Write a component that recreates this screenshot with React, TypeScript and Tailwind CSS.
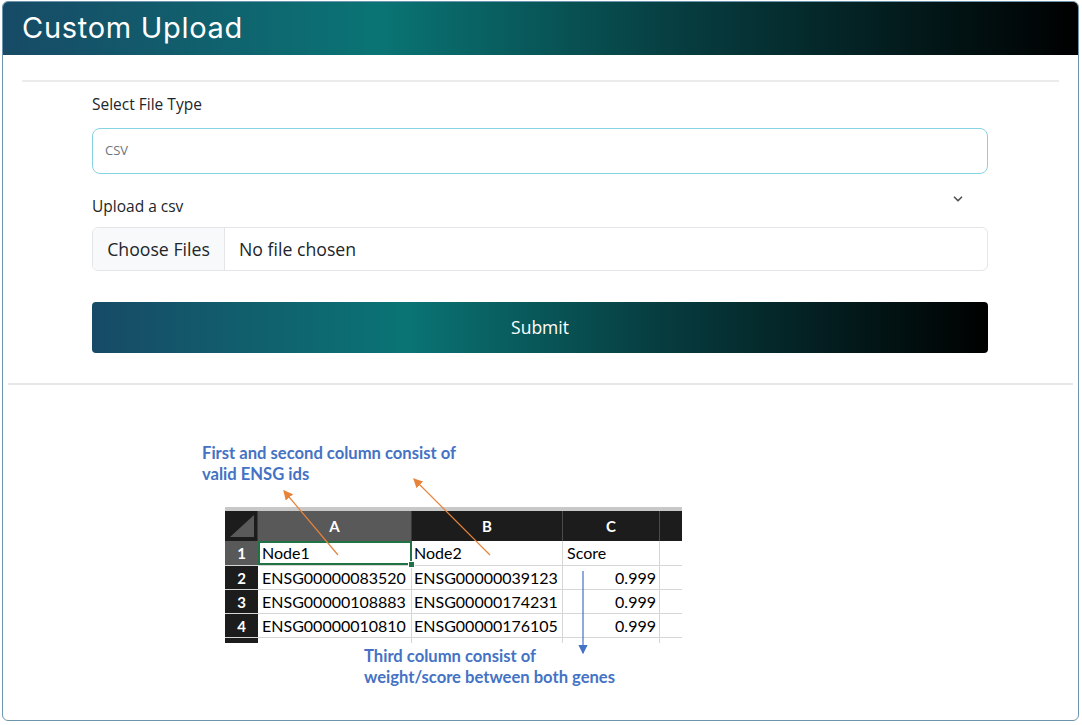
import { ChevronDown } from 'lucide-react';

const rows = [
    { n: '2', a: 'ENSG00000083520', b: 'ENSG00000039123', c: '0.999' },
    { n: '3', a: 'ENSG00000108883', b: 'ENSG00000174231', c: '0.999' },
    { n: '4', a: 'ENSG00000010810', b: 'ENSG00000176105', c: '0.999' },
];

const grad = 'bg-[linear-gradient(90deg,#174a66_0%,#0a7474_35%,#073f42_62%,#000_100%)]';

function Sheet() {
    return (
        <div className="w-[457px] font-['Lato',sans-serif] font-normal text-[16px] leading-[20px] text-black">
            <div className="h-[4px] bg-[#c8c8c8]" />
            {/* column headers */}
            <div className="flex h-[30px] bg-[#1c1c1c] text-white font-bold text-[15px]">
                <div className="w-[33px] relative border-r border-[#3a3a3a]">
                    <svg className="absolute left-[5px] bottom-[4px]" width="24" height="22" viewBox="0 0 24 22">
                        <polygon points="24,0 24,22 0,22" fill="#5a5a5a" />
                    </svg>
                </div>
                <div className="w-[154px] bg-[#595959] flex items-center justify-center border-r border-[#3a3a3a]">A</div>
                <div className="w-[151px] flex items-center justify-center border-r border-[#4a4a4a]">B</div>
                <div className="w-[97px] flex items-center justify-center border-r border-[#4a4a4a]">C</div>
                <div className="flex-1" />
            </div>
            {/* row 1 */}
            <div className="flex h-[25px] border-b border-[#d6d6d6]">
                <div className="w-[33px] bg-[#595959] text-white font-bold text-[15px] flex items-center justify-center">1</div>
                <div className="w-[154px] relative border-2 border-[#217346] flex items-center pl-[2px]">
                    Node1
                    <div className="absolute right-[-5px] bottom-[-5px] w-[7px] h-[7px] bg-[#217346] border border-white" />
                </div>
                <div className="w-[151px] flex items-center pl-[2px] border-r border-[#d6d6d6]">Node2</div>
                <div className="w-[97px] flex items-center pl-[4px] border-r border-[#d6d6d6]">Score</div>
                <div className="flex-1" />
            </div>
            {rows.map((r) => (
                <div key={r.n} className="flex h-[24px] border-b border-[#d6d6d6]">
                    <div className="w-[33px] bg-[#1c1c1c] text-white font-bold text-[15px] flex items-center justify-center">{r.n}</div>
                    <div className="w-[154px] flex items-center pl-[4px] border-r border-[#d6d6d6]">{r.a}</div>
                    <div className="w-[151px] flex items-center pl-[2px] border-r border-[#d6d6d6]">{r.b}</div>
                    <div className="w-[97px] flex items-center justify-end pr-[3px] border-r border-[#d6d6d6]">{r.c}</div>
                    <div className="flex-1" />
                </div>
            ))}
            <div className="flex h-[5px]">
                <div className="w-[33px] bg-[#1c1c1c]" />
                <div className="w-[154px] border-r border-[#d6d6d6]" />
                <div className="w-[151px] border-r border-[#d6d6d6]" />
                <div className="w-[97px] border-r border-[#d6d6d6]" />
            </div>
        </div>
    );
}

export default function App() {
    return (
        <div className="w-[1082px] h-[725px] bg-white pl-[2px] pt-[1px] font-['Open_Sans',sans-serif] text-[#212529]">
            <div className="w-[1077px] h-[720px] border border-[#6d95ad] rounded-[6px] overflow-hidden flex flex-col">
                {/* Header */}
                <div className={`h-[53px] shrink-0 flex items-center px-[19px] pb-[2px] ${grad}`}>
                    <h1 className="font-['Inter',sans-serif] text-[29px] text-white tracking-[0.7px]">Custom Upload</h1>
                </div>

                {/* Form */}
                <div className="px-[19px] pt-[25px]">
                    <div className="h-[2px] bg-[#ebebeb]" />
                </div>
                <div className="ml-[89px] w-[896px] mt-[10px]">
                    <label className="block text-[15.5px] leading-[24px]">Select File Type</label>
                    <div className="mt-[12px] h-[46px] border border-[#86d3e3] rounded-[8px] flex items-center px-[12px] text-[13px] text-[#6c757d]">
                        CSV
                    </div>
                    <div className="mt-[20px] flex items-center justify-between h-[24px]">
                        <label className="text-[15.5px] leading-[24px]">Upload a csv</label>
                        <ChevronDown className="w-[14px] h-[14px] text-[#555] mr-[23px] -mt-[14px]" strokeWidth={3} />
                    </div>
                    <div className="mt-[9px] h-[44px] border border-[#e3e5e8] rounded-[6px] flex overflow-hidden text-[17.7px]">
                        <div className="w-[132px] bg-[#f8f9fa] border-r border-[#e3e5e8] flex items-center justify-center">Choose Files</div>
                        <div className="flex items-center pl-[14px]">No file chosen</div>
                    </div>
                    <button className={`mt-[31px] w-full h-[51px] rounded-[4px] text-white text-[17.5px] ${grad}`}>
                        Submit
                    </button>
                </div>
                <div className="px-[5px] mt-[30px]">
                    <div className="h-[2px] bg-[#e6e6e6]" />
                </div>

                {/* Example image */}
                <div className="relative ml-[199px] mt-[58px] w-[480px] font-['Lato',sans-serif] font-bold text-[#4472c4] text-[16.6px] leading-[21px]">
                    <p>First and second column consist of<br />valid ENSG ids</p>
                    <div className="ml-[23px] mt-[22px]">
                        <Sheet />
                    </div>
                    <p className="ml-[162px] mt-[3px]">Third column consist of<br />weight/score between both genes</p>
                    <svg className="absolute left-0 top-0 pointer-events-none" width="480" height="260" viewBox="0 0 480 260">
                        <defs>
                            <marker id="ao" markerWidth="8" markerHeight="8" refX="7" refY="4" orient="auto">
                                <path d="M0,0 L8,4 L0,8 z" fill="#e8833a" />
                            </marker>
                            <marker id="ab" markerWidth="8" markerHeight="8" refX="7" refY="4" orient="auto">
                                <path d="M0,0 L8,4 L0,8 z" fill="#4472c4" />
                            </marker>
                        </defs>
                        <line x1="136" y1="112" x2="82" y2="48" stroke="#e8833a" strokeWidth="1.2" markerEnd="url(#ao)" />
                        <line x1="288" y1="112" x2="212" y2="36" stroke="#e8833a" strokeWidth="1.2" markerEnd="url(#ao)" />
                        <line x1="381" y1="128" x2="381" y2="210" stroke="#4472c4" strokeWidth="1.2" markerEnd="url(#ab)" />
                    </svg>
                </div>
            </div>
        </div>
    );
}
